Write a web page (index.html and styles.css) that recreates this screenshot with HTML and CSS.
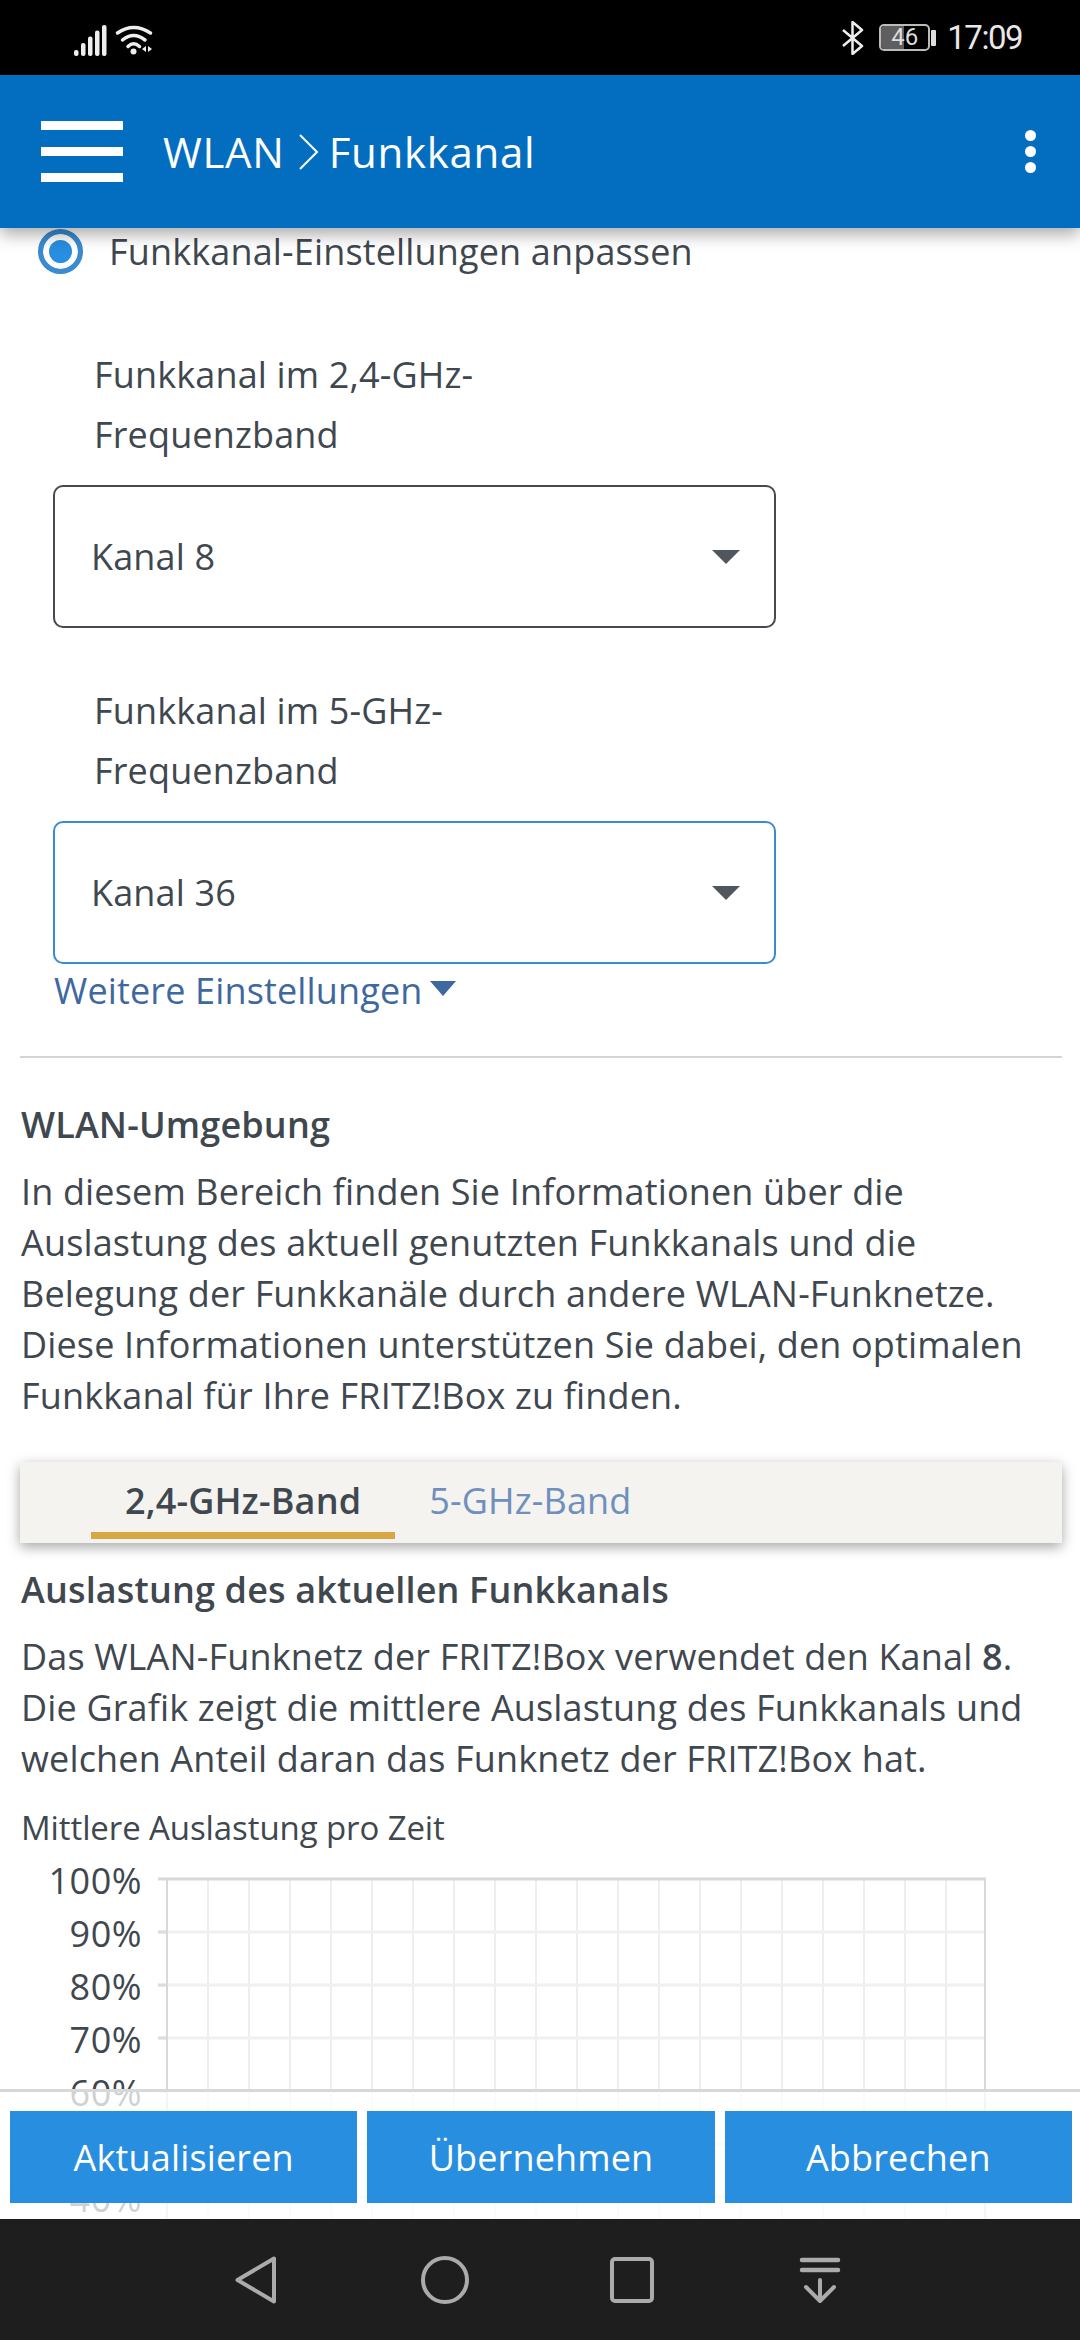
FILE: index.html
```html
<!DOCTYPE html>
<html lang="de">
<head>
  <meta charset="UTF-8">
  <title>WLAN Funkkanal</title>
  <link rel="stylesheet" href="styles.css">
</head>
<body>
  <div class="phone">
    <div class="statusbar">
      <svg class="status-left" width="90" height="40" viewBox="74 15 90 40">
        <g fill="#eee">
          <rect x="74" y="47" width="4.5" height="6" rx="2"/>
          <rect x="81" y="40" width="4.5" height="13" rx="2"/>
          <rect x="88" y="33.500" width="4.500" height="19.500" rx="2"/>
          <rect x="95" y="27.500" width="4.500" height="25.500" rx="2"/>
          <rect x="102" y="22" width="4.500" height="31" rx="2"/>
          <circle cx="133.500" cy="48.500" r="3"/>
          <path d="M142 46l4-3v6zM148 43l4 3-4 3z"/>
        </g>
        <g fill="none" stroke="#eee" stroke-width="3.500" stroke-linecap="round">
          <path d="M117.500 30Q133.500 19 150.500 30"/>
          <path d="M122.500 37Q133.500 28 145 37"/>
          <path d="M128 43.500Q133.500 38 139.500 43.500"/>
        </g>
      </svg>
      <div class="status-right">
        <svg width="22" height="34" viewBox="0 0 22 34">
          <path d="M1 9L20 25 10.500 33V1L20 9 1 25" fill="none" stroke="#eee" stroke-width="2.500" stroke-linejoin="round"/>
        </svg>
        <div class="battery">
          <span class="battery-fill"></span>
          <span class="battery-num">46</span>
        </div>
        <span class="battery-nub"></span>
        <span class="clock">17:09</span>
      </div>
    </div>

    <header class="appbar">
      <div class="burger"><span></span><span></span><span></span></div>
      <div class="crumb">
        <span>WLAN</span>
        <svg width="22" height="36" viewBox="0 0 22 36"><path d="M2 1L19 18 2 35" fill="none" stroke="#fff" stroke-width="2"/></svg>
        <span>Funkkanal</span>
      </div>
      <div class="dots"><span></span><span></span><span></span></div>
    </header>

    <main class="content">
      <div class="radio-row">
        <span class="radio"></span>
        <span>Funkkanal-Einstellungen anpassen</span>
      </div>

      <div class="field-label first">Funkkanal im 2,4-GHz-<br>Frequenzband</div>
      <div class="select">Kanal 8<span class="caret"></span></div>

      <div class="field-label">Funkkanal im 5-GHz-<br>Frequenzband</div>
      <div class="select focus">Kanal 36<span class="caret"></span></div>

      <div class="more">Weitere Einstellungen<span class="more-caret"></span></div>

      <hr class="divider">

      <h2 class="heading">WLAN-Umgebung</h2>
      <p class="text">In diesem Bereich finden Sie Informationen über die<br>Auslastung des aktuell genutzten Funkkanals und die<br>Belegung der Funkkanäle durch andere WLAN-Funknetze.<br>Diese Informationen unterstützen Sie dabei, den optimalen<br>Funkkanal für Ihre FRITZ!Box zu finden.</p>

      <div class="tabs">
        <div class="tab active">2,4-GHz-Band</div>
        <div class="tab">5-GHz-Band</div>
      </div>

      <h2 class="heading">Auslastung des aktuellen Funkkanals</h2>
      <p class="text">Das WLAN-Funknetz der FRITZ!Box verwendet den Kanal <b>8</b>.<br>Die Grafik zeigt die mittlere Auslastung des Funkkanals und<br>welchen Anteil daran das Funknetz der FRITZ!Box hat.</p>

      <div class="chart-title">Mittlere Auslastung pro Zeit</div>
      <svg class="chart" width="1080" height="400" viewBox="0 0 1080 400">
        <g stroke="#eeeeee" stroke-width="2">
          <path d="M208 31V400M249 31V400M290 31V400M331 31V400M372 31V400M413 31V400M454 31V400M495 31V400M536 31V400M577 31V400M618 31V400M659 31V400M700 31V400M741 31V400M782 31V400M823 31V400M864 31V400M905 31V400M946 31V400"/>
        </g>
        <g stroke="#f0f0f0" stroke-width="3">
          <path d="M158 84H985M158 137H985M158 190H985M158 243H985M158 296H985M158 349H985"/>
        </g>
        <path d="M158 84H167M158 137H167M158 190H167M158 243H167M158 296H167M158 349H167" stroke="#dddddd" stroke-width="3"/>
        <path d="M167 31V400M985 31V400" stroke="#d8d8d8" stroke-width="2"/>
        <path d="M158 31H986" stroke="#d8d8d8" stroke-width="3"/>
        <g class="chart-labels">
          <text x="142" y="46">100%</text>
          <text x="142" y="99">90%</text>
          <text x="142" y="152">80%</text>
          <text x="142" y="205">70%</text>
          <text x="142" y="258">60%</text>
          <text x="142" y="364">40%</text>
        </g>
      </svg>

      <div class="actions">
        <button class="btn">Aktualisieren</button>
        <button class="btn">Übernehmen</button>
        <button class="btn">Abbrechen</button>
      </div>
    </main>

    <nav class="navbar">
      <svg width="48" height="48" viewBox="0 0 48 48"><path d="M4.500 24L41 2.500V45.500Z" fill="none" stroke="#ababab" stroke-width="4" stroke-linejoin="round"/></svg>
      <svg width="48" height="48" viewBox="0 0 48 48"><circle cx="24" cy="24" r="22" fill="none" stroke="#ababab" stroke-width="4"/></svg>
      <svg width="48" height="48" viewBox="0 0 48 48"><rect x="4" y="3" width="40" height="42" rx="3" fill="none" stroke="#ababab" stroke-width="4"/></svg>
      <svg width="48" height="48" viewBox="0 0 48 48">
        <g fill="none" stroke="#ababab" stroke-width="4.500" stroke-linecap="round" stroke-linejoin="round">
          <path d="M6 4H42M6 14H42"/>
          <path d="M24 24V44M10 31L24 45 38 31" stroke-width="4"/>
        </g>
      </svg>
    </nav>
  </div>
</body>
</html>
```

FILE: styles.css
```css
* {
  box-sizing: border-box;
}
html,
body {
  margin: 0;
  width: 1080px;
  height: 2340px;
  overflow: hidden;
}
body {
  font-family: "Open Sans", "Noto Sans", sans-serif;
  font-size: 36px;
  letter-spacing: 0.15px;
  color: #3f474f;
}

.phone {
  width: 100%; height: 100%;
  display: flex;
  flex-direction: column;
  background: #fff;
}

/* status bar */
.statusbar {
  height: 75px;
  flex: none;
  background: #000;
  display: flex;
  align-items: center;
  justify-content: space-between;
  padding: 0 58px 0 74px;
}
.status-left {
  display: block;
}
.status-right {
  display: flex;
  align-items: center;
}
.battery {
  position: relative;
  width: 51px; height: 27px;
  margin-left: 15px;
  border: 2px solid #bbb;
  border-radius: 5px;
  overflow: hidden;
}
.battery-fill {
  display: block;
  width: 23px; height: 100%;
  background: #5e5e5e;
}
.battery-num {
  position: absolute;
  top: 0; left: 0; right: 0;
  text-align: center;
  font: 24px/23px Roboto, sans-serif;
  letter-spacing: 0;
  color: #ddd;
}
.battery-nub {
  width: 5px; height: 16px;
  margin-left: 1px;
  background: #ddd;
  border-radius: 1px;
}
.clock {
  margin-left: 11px;
  font: 33px/40px Roboto, sans-serif;
  letter-spacing: -1.5px;
  color: #e8e8e8;
}

/* app bar */
.appbar {
  height: 153px;
  flex: none;
  background: #036ebf;
  display: flex;
  align-items: center;
  padding: 0 44px 0 41px;
  color: #fff;
  position: relative;
  z-index: 2;
  box-shadow: 0 6px 16px rgba(0, 0, 0, .35);
}
.burger span {
  display: block;
  width: 82px; height: 9px;
  background: #fff;
  margin-bottom: 17px;
}
.burger span:last-child {
  margin-bottom: 0;
}
.crumb {
  display: flex;
  align-items: center;
  margin-left: 40px;
  font-size: 42px;
  letter-spacing: 0.7px;
}
.crumb svg {
  margin: 0 9px 0 13px;
}
.dots {
  margin-left: auto;
}
.dots span {
  display: block;
  width: 11px; height: 11px;
  background: #fff;
  border-radius: 50%;
  margin-bottom: 5px;
}
.dots span:last-child {
  margin-bottom: 0;
}

/* content */
.content {
  flex: 1;
  position: relative;
  overflow: hidden;
  padding: 0 18px 0 21px;
}
.radio-row {
  height: 46px;
  display: flex;
  align-items: center;
  gap: 26px;
  margin-left: 17px;
}
.radio {
  width: 45px; height: 45px;
  border: 5px solid #3a8bd0;
  border-radius: 50%;
  background: #288ee0;
  box-shadow: inset 0 0 0 6px #fff;
}
.field-label {
  margin: 53px 0 20px 73px;
  line-height: 60px;
}
.field-label.first {
  margin-top: 71px;
}
.select {
  width: 723px; height: 143px;
  margin-left: 32px;
  padding: 0 36px;
  display: flex;
  align-items: center;
  justify-content: space-between;
  border: 2px solid #444a50;
  border-radius: 10px;
}
.select.focus {
  border-color: #3a8bd0;
}
.caret {
  margin-right: -2px;
  border-left: 14px solid transparent;
  border-right: 14px solid transparent;
  border-top: 14px solid #50565e;
}
.more {
  margin: 1px 0 0 33px;
  line-height: 51px;
  color: #3f67a0;
  display: flex;
  align-items: center;
}
.more-caret {
  margin-left: 7px;
  margin-top: -4px;
  border-left: 13px solid transparent;
  border-right: 13px solid transparent;
  border-top: 15px solid #3f67a0;
}
.divider {
  margin: 40px 0 0 -1px;
  border: 0;
  border-top: 2px solid #d4d4d4;
}
.heading {
  margin: 41px 0 0;
  font-size: 36px;
  line-height: 51px;
  font-weight: 600;
}
.text {
  margin: 16px 0 0;
  line-height: 51px;
}
.text b {
  font-weight: 600;
}
.tabs {
  height: 81px;
  margin: 41px 0 0 -1px;
  padding-left: 71px;
  display: flex;
  background: #f4f3ef;
  box-shadow: 0 4px 12px rgba(0, 0, 0, .35);
}
.tab {
  height: 77px;
  padding: 0 34px;
  line-height: 78px;
  color: #6f8fbd;
}
.tab.active {
  font-weight: 600;
  color: #3f474f;
  border-bottom: 7px solid #d9a644;
}
.tabs + .heading {
  margin-top: 21px;
}
.chart-title {
  margin-top: 24px;
  font-size: 33px;
  letter-spacing: -0.1px;
  line-height: 40px;
}
.chart {
  display: block;
  margin-left: -21px;
}
.chart-labels text {
  font-size: 36px;
  letter-spacing: 0.5px;
  text-anchor: end;
  fill: #3f474f;
}

/* button bar lies over the chart */
.actions {
  position: absolute;
  left: 0; right: 0; bottom: 0;
  height: 130px;
  padding: 19px 8px 16px 10px;
  display: flex;
  gap: 10px;
  background: rgba(255, 255, 255, .75);
  border-top: 3px solid #d8d8d8;
}
.btn {
  flex: 1;
  border: 0;
  background: #288ee0;
  color: #fff;
  font: inherit;
  letter-spacing: inherit;
}

/* android nav */
.navbar {
  height: 121px;
  flex: none;
  background: #1e1e1e;
  display: flex;
  align-items: center;
  gap: 139.700px;
  padding-left: 233px;
}
```
